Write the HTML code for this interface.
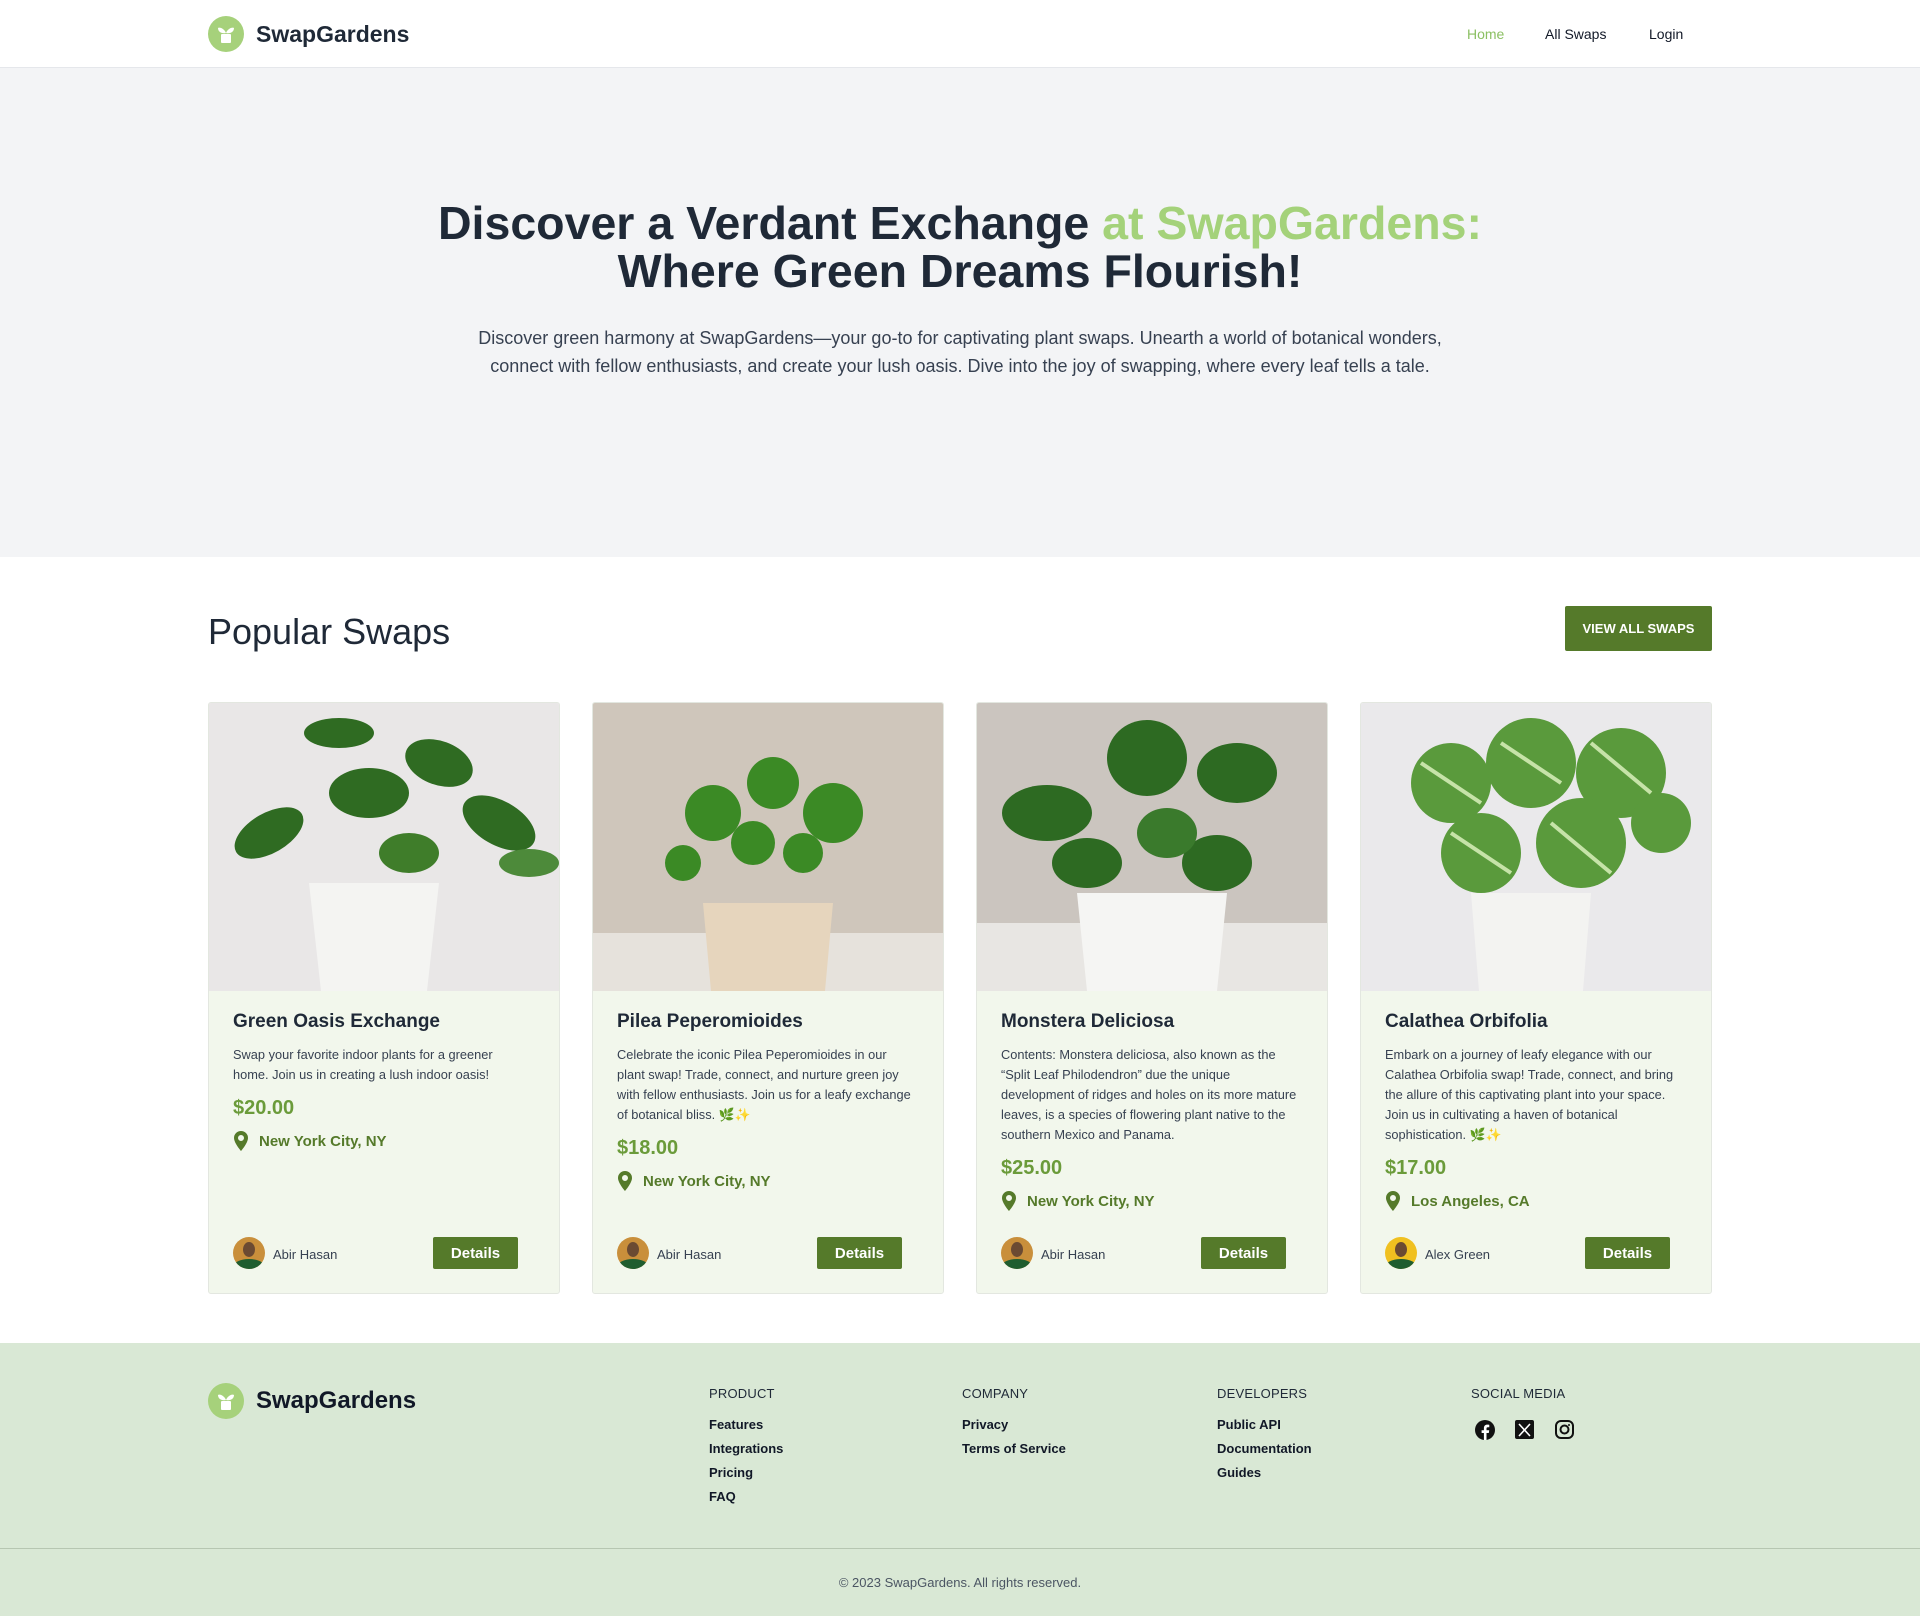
<!DOCTYPE html>
<html><head><meta charset="utf-8"><style>
*{box-sizing:border-box;margin:0;padding:0}
body{width:1920px;height:1616px;font-family:"Liberation Sans",sans-serif;color:#1f2937;background:#fff;position:relative;overflow:hidden}
.nav{height:68px;border-bottom:1px solid #e5e7eb;position:relative}
.logo{position:absolute;left:208px;top:16px;display:flex;align-items:center}
.logo .ic{width:36px;height:36px;border-radius:50%;background:#a6d17b;display:flex;align-items:center;justify-content:center}
.logo span{font-size:23px;font-weight:600;margin-left:12px;color:#1f2937}
.nav a{position:absolute;top:26px;font-size:14px;color:#111827;text-decoration:none}
.hero{position:absolute;top:68px;left:0;width:1920px;height:489px;background:#f3f4f6;text-align:center}
.hero h1{font-size:46.5px;line-height:48px;font-weight:700;margin-top:131px;color:#1f2937}
.hero h1 em{font-style:normal;color:#a4d27a}
.hero p{font-size:18px;line-height:28px;color:#374151;width:1000px;margin:29px auto 0}
.sec{position:absolute;top:557px;left:208px;width:1504px}
.sec h2{position:absolute;top:54px;font-size:36px;font-weight:400;color:#1f2937}
.vbtn{position:absolute;right:0;top:49px;width:147px;height:45px;background:#557a2a;color:#fff;font-size:13px;font-weight:700;display:flex;align-items:center;justify-content:center;border-radius:2px}
.cards{position:absolute;top:145px;left:0;display:flex;gap:32px}
.card{width:352px;height:592px;background:#f2f7ec;border:1px solid #e3e7e0;border-radius:3px;position:relative;overflow:hidden}
.card svg.img{display:block;width:352px;height:288px}
.cc{padding:20px 24px}
.cc h3{font-size:19px;font-weight:700;color:#1f2937;margin-bottom:12px}
.cc p{font-size:12.8px;line-height:20px;color:#374151;padding-right:6px}
.price{font-size:20px;font-weight:700;color:#6b9b3a;margin-top:12px}
.loc{font-size:15px;font-weight:700;color:#557a2a;margin-top:11px;display:flex;align-items:center;gap:10px}
.bot{position:absolute;left:24px;right:24px;bottom:24px;height:32px}
.av{position:absolute;left:0;top:0;width:32px;height:32px;border-radius:50%;background:#c98f3b;overflow:hidden}
.av::after{content:"";position:absolute;left:0;bottom:-6px;width:32px;height:16px;border-radius:50%;background:#1f5d2f}
.av::before{content:"";position:absolute;left:10px;top:5px;width:12px;height:15px;border-radius:50%;background:#6b4a32}
.nm{position:absolute;left:40px;top:10px;font-size:13px;color:#374151}
.det{position:absolute;left:200px;top:0;width:85px;height:32px;background:#557a2a;color:#fff;font-weight:700;font-size:15px;display:flex;align-items:center;justify-content:center;border-radius:2px}
.foot{position:absolute;top:1343px;left:0;width:1920px;height:273px;background:#d9e8d5}
.flogo{position:absolute;left:208px;top:40px;display:flex;align-items:center}
.flogo span{font-size:24px;font-weight:600;margin-left:12px;color:#111827}
.col{position:absolute;top:43px}
.col h4{font-size:13px;font-weight:400;color:#1f2937;margin-bottom:12px;letter-spacing:.2px}
.col div{font-size:13px;font-weight:700;color:#111827;line-height:24px}
.hr{position:absolute;top:205px;left:0;width:1920px;border-top:1px solid #b6c6b1}
.copy{position:absolute;top:232px;width:1920px;text-align:center;font-size:13px;color:#4b5563}
</style></head><body>
<div class="nav">
<div class="logo"><div class="ic"><svg width="20" height="20" viewBox="0 0 20 20"><path d="M10 9C8 4 3 3 2 4c0 4 4 6 8 5zM10 9c2-5 7-6 8-5 0 4-4 6-8 5z" fill="#fff"/><rect x="5" y="10" width="10" height="9" rx="1" fill="#fff"/></svg></div><span>SwapGardens</span></div>
<a style="left:1467px;color:#8cc063">Home</a><a style="left:1545px">All Swaps</a><a style="left:1649px">Login</a>
</div>
<div class="hero">
<h1>Discover a Verdant Exchange <em>at SwapGardens:</em><br>Where Green Dreams Flourish!</h1>
<p>Discover green harmony at SwapGardens—your go-to for captivating plant swaps. Unearth a world of botanical wonders, connect with fellow enthusiasts, and create your lush oasis. Dive into the joy of swapping, where every leaf tells a tale.</p>
</div>
<div class="sec">
<h2>Popular Swaps</h2>
<div class="vbtn">VIEW ALL SWAPS</div>
<div class="cards">
<div class="card">
<svg class="img" viewBox="0 0 352 288"><rect width="352" height="288" fill="#e9e7e7"/><g fill="#2f6b22"><ellipse cx="60" cy="130" rx="38" ry="20" transform="rotate(-30 60 130)"/><ellipse cx="160" cy="90" rx="40" ry="25"/><ellipse cx="230" cy="60" rx="35" ry="22" transform="rotate(20 230 60)"/><ellipse cx="290" cy="120" rx="40" ry="22" transform="rotate(30 290 120)"/><ellipse cx="130" cy="30" rx="35" ry="15"/><ellipse cx="200" cy="150" rx="30" ry="20" fill="#3f7d2a"/><ellipse cx="320" cy="160" rx="30" ry="14" fill="#4d8a3a"/></g><path d="M100 180h130l-12 108H112z" fill="#f4f4f2"/></svg>
<div class="cc"><h3>Green Oasis Exchange</h3><p>Swap your favorite indoor plants for a greener home. Join us in creating a lush indoor oasis!</p><div class="price">$20.00</div><div class="loc"><svg width="16" height="20" viewBox="0 0 16 20"><path d="M8 0a7 7 0 0 0-7 7c0 5 7 13 7 13s7-8 7-13a7 7 0 0 0-7-7zm0 10a3 3 0 1 1 0-6 3 3 0 0 1 0 6z" fill="#557a2a"/></svg>New York City, NY</div></div>
<div class="bot"><div class="av"></div><div class="nm">Abir Hasan</div><div class="det">Details</div></div></div>
<div class="card">
<svg class="img" viewBox="0 0 352 288"><rect width="352" height="288" fill="#cfc6bb"/><rect y="230" width="352" height="58" fill="#e6e2dc"/><g fill="#3b8a25"><circle cx="120" cy="110" r="28"/><circle cx="180" cy="80" r="26"/><circle cx="240" cy="110" r="30"/><circle cx="160" cy="140" r="22"/><circle cx="90" cy="160" r="18"/><circle cx="210" cy="150" r="20"/></g><path d="M110 200h130l-8 88H118z" fill="#e6d5bd"/></svg>
<div class="cc"><h3>Pilea Peperomioides</h3><p>Celebrate the iconic Pilea Peperomioides in our plant swap! Trade, connect, and nurture green joy with fellow enthusiasts. Join us for a leafy exchange of botanical bliss. 🌿✨</p><div class="price">$18.00</div><div class="loc"><svg width="16" height="20" viewBox="0 0 16 20"><path d="M8 0a7 7 0 0 0-7 7c0 5 7 13 7 13s7-8 7-13a7 7 0 0 0-7-7zm0 10a3 3 0 1 1 0-6 3 3 0 0 1 0 6z" fill="#557a2a"/></svg>New York City, NY</div></div>
<div class="bot"><div class="av"></div><div class="nm">Abir Hasan</div><div class="det">Details</div></div></div>
<div class="card">
<svg class="img" viewBox="0 0 352 288"><rect width="352" height="288" fill="#cbc5bf"/><rect y="220" width="352" height="68" fill="#e8e6e3"/><g fill="#2d6a22"><ellipse cx="70" cy="110" rx="45" ry="28"/><ellipse cx="170" cy="55" rx="40" ry="38"/><ellipse cx="260" cy="70" rx="40" ry="30"/><ellipse cx="110" cy="160" rx="35" ry="25"/><ellipse cx="240" cy="160" rx="35" ry="28"/><ellipse cx="190" cy="130" rx="30" ry="25" fill="#3a7a2c"/></g><path d="M100 190h150l-10 98H110z" fill="#f5f5f3"/></svg>
<div class="cc"><h3>Monstera Deliciosa</h3><p>Contents: Monstera deliciosa, also known as the “Split Leaf Philodendron” due the unique development of ridges and holes on its more mature leaves, is a species of flowering plant native to the southern Mexico and Panama.</p><div class="price">$25.00</div><div class="loc"><svg width="16" height="20" viewBox="0 0 16 20"><path d="M8 0a7 7 0 0 0-7 7c0 5 7 13 7 13s7-8 7-13a7 7 0 0 0-7-7zm0 10a3 3 0 1 1 0-6 3 3 0 0 1 0 6z" fill="#557a2a"/></svg>New York City, NY</div></div>
<div class="bot"><div class="av"></div><div class="nm">Abir Hasan</div><div class="det">Details</div></div></div>
<div class="card">
<svg class="img" viewBox="0 0 352 288"><rect width="352" height="288" fill="#eae9eb"/><g fill="#5a9a3c"><circle cx="90" cy="80" r="40"/><circle cx="170" cy="60" r="45"/><circle cx="260" cy="70" r="45"/><circle cx="120" cy="150" r="40"/><circle cx="220" cy="140" r="45"/><circle cx="300" cy="120" r="30"/></g><g stroke="#c6e3a8" stroke-width="4" fill="none"><path d="M60 60l60 40M140 40l60 40M230 40l60 50M90 130l60 40M190 120l60 50"/></g><path d="M110 190h120l-8 98H118z" fill="#f3f3f1"/></svg>
<div class="cc"><h3>Calathea Orbifolia</h3><p>Embark on a journey of leafy elegance with our Calathea Orbifolia swap! Trade, connect, and bring the allure of this captivating plant into your space. Join us in cultivating a haven of botanical sophistication. 🌿✨</p><div class="price">$17.00</div><div class="loc"><svg width="16" height="20" viewBox="0 0 16 20"><path d="M8 0a7 7 0 0 0-7 7c0 5 7 13 7 13s7-8 7-13a7 7 0 0 0-7-7zm0 10a3 3 0 1 1 0-6 3 3 0 0 1 0 6z" fill="#557a2a"/></svg>Los Angeles, CA</div></div>
<div class="bot"><div class="av" style="background:#f0c020"></div><div class="nm">Alex Green</div><div class="det">Details</div></div></div>
</div></div>
<div class="foot">
<div class="flogo"><div class="logo" style="position:static"><div class="ic"><svg width="20" height="20" viewBox="0 0 20 20"><path d="M10 9C8 4 3 3 2 4c0 4 4 6 8 5zM10 9c2-5 7-6 8-5 0 4-4 6-8 5z" fill="#fff"/><rect x="5" y="10" width="10" height="9" rx="1" fill="#fff"/></svg></div></div><span>SwapGardens</span></div>
<div class="col" style="left:709px"><h4>PRODUCT</h4><div>Features</div><div>Integrations</div><div>Pricing</div><div>FAQ</div></div>
<div class="col" style="left:962px"><h4>COMPANY</h4><div>Privacy</div><div>Terms of Service</div></div>
<div class="col" style="left:1217px"><h4>DEVELOPERS</h4><div>Public API</div><div>Documentation</div><div>Guides</div></div>
<div class="col" style="left:1471px"><h4>SOCIAL MEDIA</h4>
<svg style="position:absolute;top:33px;left:3px" width="100" height="22" viewBox="0 0 100 22"><circle cx="11" cy="11" r="10" fill="#111"/><path d="M12.5 21v-7h2.3l.4-2.8h-2.7V9.5c0-.8.3-1.300 1.4-1.3h1.4V5.7c-.3 0-1.1-.1-2-.1-2 0-3.4 1.2-3.4 3.5v2.1H7.6V14h2.3v7z" fill="#fff"/><rect x="41" y="1" width="19" height="19" rx="2" fill="#111"/><path d="M45 5l11 12M56 5L45 17" stroke="#fff" stroke-width="1.6"/><rect x="82" y="2" width="17" height="17" rx="5" fill="none" stroke="#111" stroke-width="2"/><circle cx="90.5" cy="10.5" r="4" fill="none" stroke="#111" stroke-width="2"/><circle cx="95" cy="6" r="1" fill="#111"/></svg></div>
<div class="hr"></div>
<div class="copy">© 2023 SwapGardens. All rights reserved.</div>
</div>
</body></html>
